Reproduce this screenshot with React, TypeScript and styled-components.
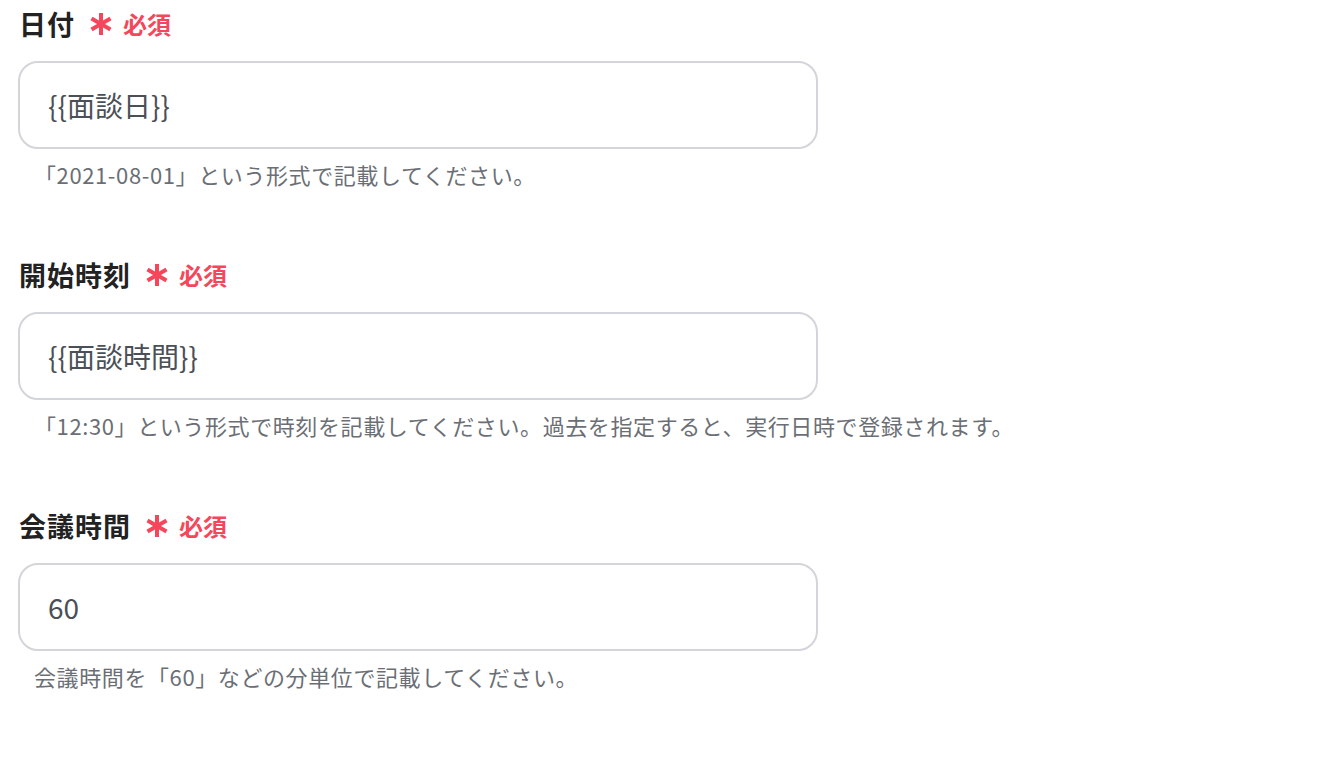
import React from "react";
import styled, { createGlobalStyle } from "styled-components";

const Global = createGlobalStyle`
  html, body { margin: 0; padding: 0; background: #ffffff; }
  body { font-family: "Noto Sans CJK JP", "Noto Sans", sans-serif; }
`;

const Form = styled.div`
  display: flex;
  flex-direction: column;
  gap: 68px;
  padding: 6px 0 0 18px;
`;

const Field = styled.div`
  display: flex;
  flex-direction: column;
  width: 800px;
`;

const LabelRow = styled.div`
  display: flex;
  align-items: center;
  height: 36px;
`;

const LabelText = styled.span`
  font-size: 27px;
  font-weight: 700;
  letter-spacing: 1px;
  color: #222222;
  line-height: 36px;
  margin-left: 1px;
`;

const Required = styled.span`
  display: inline-flex;
  align-items: center;
  margin-left: 14px;
  color: #f5475b;
  font-size: 24px;
  font-weight: 700;
  line-height: 36px;
  gap: 10px;
`;

const Input = styled.div`
  box-sizing: border-box;
  margin-top: 19px;
  height: 88px;
  border: 2px solid #d3d5da;
  border-radius: 20px;
  display: flex;
  align-items: center;
  padding: 0 28px;
  font-size: 28px;
  color: #4b4f56;
  font-family: "Noto Sans CJK JP", "Noto Sans", sans-serif;
`;

const Help = styled.div`
  margin-top: 10px;
  padding-left: 16px;
  font-size: 22px;
  letter-spacing: 0.6px;
  line-height: 30px;
  color: #6b6f75;
  white-space: nowrap;
`;

const Asterisk = () => (
  <svg width="24" height="24" viewBox="0 0 24 24">
    <g stroke="#f5475b" strokeWidth="4">
      <line x1="12" y1="1" x2="12" y2="23" />
      <line x1="2.5" y1="6.5" x2="21.5" y2="17.5" />
      <line x1="2.5" y1="17.5" x2="21.5" y2="6.5" />
    </g>
  </svg>
);

const fields = [
  { label: "日付", value: "{{面談日}}", help: "「2021-08-01」という形式で記載してください。" },
  {
    label: "開始時刻",
    value: "{{面談時間}}",
    help: "「12:30」という形式で時刻を記載してください。過去を指定すると、実行日時で登録されます。",
  },
  { label: "会議時間", value: "60", help: "会議時間を「60」などの分単位で記載してください。" },
];

export default function App() {
  return (
    <>
      <Global />
      <Form>
        {fields.map((f) => (
          <Field key={f.label}>
            <LabelRow>
              <LabelText>{f.label}</LabelText>
              <Required>
                <Asterisk />
                必須
              </Required>
            </LabelRow>
            <Input>{f.value}</Input>
            <Help>{f.help}</Help>
          </Field>
        ))}
      </Form>
    </>
  );
}
